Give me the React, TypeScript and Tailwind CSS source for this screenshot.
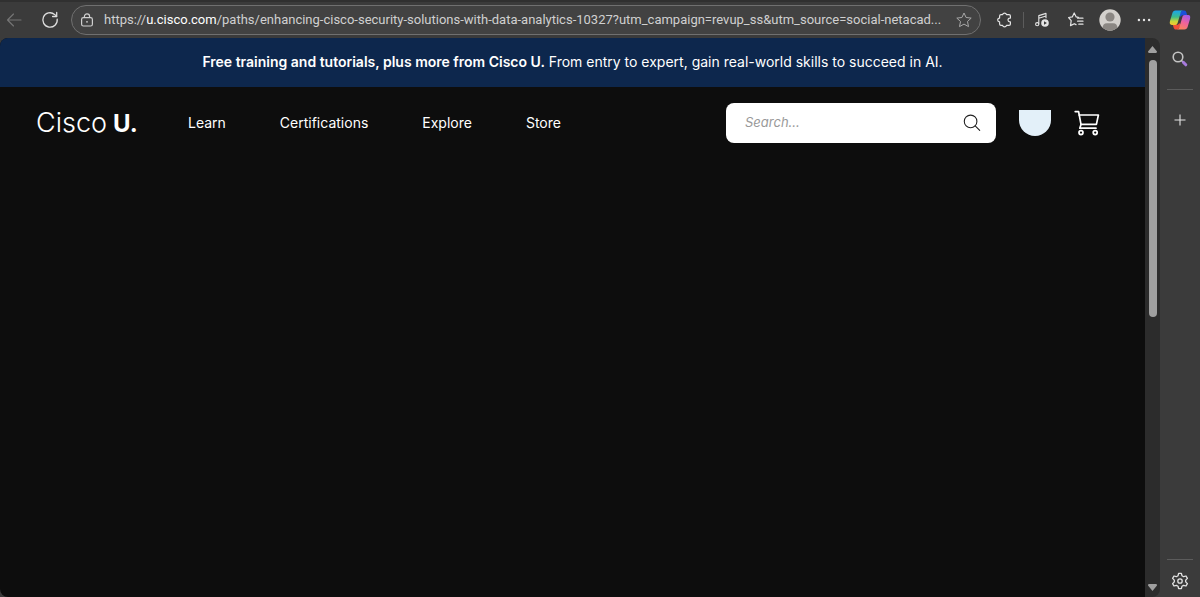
import type { ReactNode } from 'react';

const BackIcon = () => (
  <svg className="h-4 w-4" viewBox="0 0 16 16" fill="none" stroke="currentColor" strokeWidth="1.1" strokeLinecap="round" strokeLinejoin="round">
    <path d="M15 8H1.5M7.5 2L1.5 8L7.5 14" />
  </svg>
);

const ReloadIcon = () => (
  <svg className="h-[18px] w-[18px]" viewBox="0 0 18 18" fill="none" stroke="currentColor" strokeWidth="1.3" strokeLinecap="round" strokeLinejoin="round">
    <path d="M16.2 8.2A7.2 7.2 0 1 1 13.6 3.4L15.6 5.4" />
    <path d="M15.7 1.4V5.5H11.6" />
  </svg>
);

const LockIcon = () => (
  <svg className="h-[14px] w-[14px] shrink-0" viewBox="0 0 14 14" fill="none" stroke="currentColor" strokeWidth="1.2">
    <rect x="1.6" y="4.6" width="10.8" height="8.4" rx="1.8" />
    <path d="M4.4 4.6V3.4A2.6 2.6 0 0 1 9.6 3.4V4.6" />
    <circle cx="7" cy="8.8" r="0.9" fill="currentColor" stroke="none" />
  </svg>
);

const StarIcon = () => (
  <svg className="h-4 w-4" viewBox="0 0 16 16" fill="none" stroke="currentColor" strokeWidth="1" strokeLinejoin="round">
    <path d="M8 1L10.1 5.5L15.2 6.1L11.5 9.5L12.5 14.6L8 12.1L3.5 14.6L4.5 9.5L0.8 6.1L5.9 5.5Z" />
  </svg>
);

const ExtensionsIcon = () => (
  <svg className="h-4 w-4" viewBox="0 0 16 16" fill="none" stroke="currentColor" strokeWidth="1.2" strokeLinejoin="round">
    <path d="M4 2.6H5.6A2 1.9 0 0 1 9.5 2.6H12A1.4 1.4 0 0 1 13.4 4V6.1H12.9A1.9 1.9 0 0 0 12.9 9.9H13.4V12A1.4 1.4 0 0 1 12 13.4H9.5A2 1.9 0 0 1 5.6 13.4H4A1.4 1.4 0 0 1 2.6 12V9.9A1.9 1.9 0 0 1 2.6 6.1V4A1.4 1.4 0 0 1 4 2.6Z" />
  </svg>
);

const MediaIcon = () => (
  <svg className="h-4 w-4" viewBox="0 0 16 16" fill="none" stroke="currentColor" strokeWidth="1.1" strokeLinejoin="round">
    <circle cx="3.2" cy="12.2" r="1.6" />
    <path d="M4.8 12.2V3.6L12 1.4V6.2M4.8 6.2L12 4" />
    <circle cx="11" cy="11" r="3.8" fill="currentColor" stroke="none" />
    <path d="M10 9.2L12.9 11L10 12.8Z" fill="#3b3b3b" stroke="none" />
  </svg>
);

const FavoritesIcon = () => (
  <svg className="h-4 w-4" viewBox="0 0 16 16" fill="none" stroke="currentColor" strokeWidth="1.2" strokeLinecap="round" strokeLinejoin="round">
    <path d="M10.4 5.3L8.2 4.9L6.2 1L4.3 4.9L0.6 5.5L3.2 8.6L2.5 13.6L6.3 11.7L8 12.6" />
    <path d="M9.6 6.2H15M9.6 9.2H15M10.8 12.2H15" />
  </svg>
);

const ProfileIcon = () => (
  <svg className="h-[22px] w-[22px]" viewBox="0 0 22 22">
    <defs>
      <clipPath id="profile-disc">
        <circle cx="11" cy="11" r="10.7" />
      </clipPath>
    </defs>
    <g clipPath="url(#profile-disc)">
      <rect width="22" height="22" fill="#d3d0cc" />
      <circle cx="11" cy="8" r="4.6" fill="#8b8783" />
      <path d="M3.6 22V19Q3.6 14.2 8 14.2H14Q18.4 14.2 18.4 19V22Z" fill="#8b8783" />
    </g>
  </svg>
);

const MoreIcon = () => (
  <svg className="h-4 w-4" viewBox="0 0 16 16" fill="currentColor">
    <circle cx="2.9" cy="8" r="1.2" />
    <circle cx="8" cy="8" r="1.2" />
    <circle cx="13.1" cy="8" r="1.2" />
  </svg>
);

const CopilotIcon = () => (
  <svg className="h-[22px] w-[22px]" viewBox="0 0 22 22">
    <defs>
      <linearGradient id="copilot-left" x1="0" y1="0" x2="0" y2="1">
        <stop offset="0" stopColor="#18a4f0" />
        <stop offset="0.45" stopColor="#3cba8c" />
        <stop offset="0.75" stopColor="#c5d63c" />
        <stop offset="1" stopColor="#f5c530" />
      </linearGradient>
      <linearGradient id="copilot-right" x1="0.7" y1="0" x2="0.3" y2="1">
        <stop offset="0" stopColor="#a55be8" />
        <stop offset="0.5" stopColor="#f0629c" />
        <stop offset="1" stopColor="#f9845a" />
      </linearGradient>
    </defs>
    <path d="M13 1.5H15.2C16.5 1.5 17 2.4 17.4 3.6L18.2 6.2H13.8C12.6 6.2 12 7 11.7 8L10 6Z" fill="#1c50d8" />
    <path d="M9 20.5H7C5.6 20.5 5 19.6 4.6 18.4L3.8 15.8H8C9.2 15.8 9.8 15 10.2 14L12 16Z" fill="#f04e38" />
    <path d="M6.6 1.5H14C12.6 1.5 12 2.6 11.6 4L8.6 14C8.2 15.2 7.6 15.9 6.2 15.9H2.8C0.8 15.9 0.4 14.2 1 12L3.4 4C3.9 2.4 4.8 1.5 6.6 1.5Z" fill="url(#copilot-left)" />
    <path d="M15.4 20.5H8C9.4 20.5 10 19.4 10.4 18L13.4 8C13.8 6.8 14.4 6.1 15.8 6.1H19.2C21.2 6.1 21.6 7.8 21 10L18.6 18C18.1 19.6 17.2 20.5 15.4 20.5Z" fill="url(#copilot-right)" />
  </svg>
);

const SidebarSearchIcon = () => (
  <svg className="h-4 w-4" viewBox="0 0 16 16" fill="none">
    <circle cx="6" cy="6" r="4.8" stroke="#c4c4c4" strokeWidth="1.6" />
    <path d="M9.7 9.7L11 11" stroke="#d0d0d0" strokeWidth="1.6" />
    <path d="M11.4 11.4L13.8 13.8" stroke="#a77bdc" strokeWidth="3" strokeLinecap="round" />
  </svg>
);

const PlusIcon = () => (
  <svg className="h-3 w-3" viewBox="0 0 12 12" stroke="currentColor" strokeWidth="1.1">
    <path d="M6 0.5V11.5M0.5 6H11.5" />
  </svg>
);

const GearIcon = () => (
  <svg className="h-[18px] w-[18px]" viewBox="0 0 18 18" fill="none" stroke="currentColor" strokeWidth="1.3" strokeLinejoin="round">
    <path d="M7.6 1.4H10.4L11 3.8L12.6 4.7L15 4L16.4 6.4L14.7 8.1V9.9L16.4 11.6L15 14L12.6 13.3L11 14.2L10.4 16.6H7.6L7 14.2L5.4 13.3L3 14L1.6 11.6L3.3 9.9V8.1L1.6 6.4L3 4L5.4 4.7L7 3.8Z" />
    <circle cx="9" cy="9" r="2.2" />
  </svg>
);

const SearchIcon = () => (
  <svg className="h-[18px] w-[18px]" viewBox="0 0 18 18" fill="none" stroke="currentColor" strokeWidth="1.1" strokeLinecap="round">
    <circle cx="7.6" cy="7.4" r="6.3" />
    <path d="M12.2 11.8L16.7 16.3" />
  </svg>
);

const CartIcon = () => (
  <svg className="h-[26px] w-[26px]" viewBox="0 0 26 26" fill="none" stroke="currentColor" strokeWidth="1.7" strokeLinecap="round" strokeLinejoin="round">
    <path d="M1.2 1.6H4.6L7 14.4L5.8 18.2H22" />
    <path d="M5.2 5H24.4L22.4 14.4H7" />
    <circle cx="7" cy="22.6" r="2" />
    <circle cx="21.2" cy="22.6" r="2" />
  </svg>
);

const IconButton = ({ label, children }: { label: string; children: ReactNode }) => (
  <button type="button" aria-label={label} className="flex h-8 w-8 shrink-0 items-center justify-center text-[#e4e4e4]">
    {children}
  </button>
);

const navItems = ['Learn', 'Certifications', 'Explore', 'Store'];

const BrowserToolbar = () => (
  <div className="flex h-[38px] shrink-0 items-center border-t-2 border-[#303030] bg-[#3b3b3b] pr-1">
    <button type="button" aria-label="Back" disabled className="flex h-8 w-7 items-center justify-center text-[#757575]">
      <BackIcon />
    </button>
    <button type="button" aria-label="Reload" className="flex h-8 w-[43px] items-center justify-center text-[#dedede]">
      <ReloadIcon />
    </button>

    {/* Address bar */}
    <div className="flex h-[30px] min-w-0 flex-1 items-center rounded-full border border-[#707070] bg-[#424242] px-2 text-[#d0d0d0]">
      <LockIcon />
      <div className="ml-[10px] min-w-0 flex-1 truncate font-['Roboto',sans-serif] text-[13px] leading-5">
        https://<span className="text-white">u.cisco.com</span>/paths/enhancing-cisco-security-solutions-with-data-analytics-10327?utm_campaign=revup_ss&amp;utm_source=social-netacad...
      </div>
      <button type="button" aria-label="Add to favorites" className="shrink-0 text-[#a8a8a8]">
        <StarIcon />
      </button>
    </div>

    <div className="ml-2 flex items-center gap-0.5">
      <IconButton label="Extensions"><ExtensionsIcon /></IconButton>
      <div className="h-4 w-px bg-[#5c5c5c]" />
      <IconButton label="Media controls"><MediaIcon /></IconButton>
      <IconButton label="Favorites"><FavoritesIcon /></IconButton>
      <IconButton label="Profile"><ProfileIcon /></IconButton>
      <IconButton label="Settings and more"><MoreIcon /></IconButton>
      <div className="ml-0.5">
        <IconButton label="Copilot"><CopilotIcon /></IconButton>
      </div>
    </div>
  </div>
);

const SiteHeader = () => (
  <header className="flex items-center py-4 pr-[45px] pl-9 text-white">
    <a href="#" className="flex w-[100px] items-baseline gap-1.5">
      <span className="text-[27px] leading-8 font-light">Cisco</span>
      <span className="text-[24px] leading-8 font-bold">U.</span>
    </a>
    <nav className="ml-[52px] flex gap-[54px] text-[14px] leading-5">
      {navItems.map((item) => (
        <a key={item} href="#">{item}</a>
      ))}
    </nav>

    <form className="ml-auto flex h-10 w-[270px] items-center rounded-lg bg-white pr-[15px] pl-[19px]">
      <input
        type="search"
        aria-label="Search"
        placeholder="Search..."
        className="min-w-0 flex-1 bg-transparent text-[13px] text-black italic outline-none placeholder:text-[#999999]"
      />
      <button type="button" aria-label="Submit search" className="text-[#222222]">
        <SearchIcon />
      </button>
    </form>
    <button type="button" aria-label="Account" className="ml-[23px] h-[26px] w-8 rounded-b-full bg-[#e3f0f9]" />
    <a href="#" aria-label="Cart" className="ml-[23px]">
      <CartIcon />
    </a>
  </header>
);

const Scrollbar = () => (
  <div className="flex w-[15px] shrink-0 flex-col items-center rounded-r-lg bg-[#2c2c2c] pt-2 pb-1.5 text-[#9f9f9f]">
    <svg className="h-[7px] w-[9px]" viewBox="0 0 9 7" fill="currentColor">
      <path d="M4.5 0L9 5.6Q9 7 8 7H1Q0 7 0 5.6Z" />
    </svg>
    <div className="mt-[7px] h-[257px] w-2 rounded-full bg-[#9f9f9f]" />
    <svg className="mt-auto h-[7px] w-[9px]" viewBox="0 0 9 7" fill="currentColor">
      <path d="M4.5 7L9 1.4Q9 0 8 0H1Q0 0 0 1.4Z" />
    </svg>
  </div>
);

const Sidebar = () => (
  <aside className="flex w-10 shrink-0 flex-col items-center pt-[5px]">
    <IconButton label="Search sidebar"><SidebarSearchIcon /></IconButton>
    <div className="my-[14px] h-px w-[26px] bg-[#5c5c5c]" />
    <IconButton label="Add to sidebar"><PlusIcon /></IconButton>
    <div className="mt-auto mb-[5px] h-px w-[26px] bg-[#5c5c5c]" />
    <IconButton label="Sidebar settings"><GearIcon /></IconButton>
  </aside>
);

export default function App() {
  return (
    <div className="flex h-screen flex-col overflow-hidden bg-[#3b3b3b] font-['Inter',sans-serif]">
      <BrowserToolbar />
      <div className="flex min-h-0 flex-1">
        <main className="min-w-0 flex-1 overflow-hidden rounded-l-lg bg-[#0d0d0d]">
          {/* Announcement */}
          <div className="flex items-center justify-center bg-[#0d274d] pt-[14px] pb-[15px] text-[14px] leading-5 text-white">
            <p>
              <strong className="font-semibold">Free training and tutorials, plus more from Cisco U.</strong> From entry to expert, gain real-world skills to succeed in AI.
            </p>
          </div>
          <SiteHeader />
        </main>
        <Scrollbar />
        <Sidebar />
      </div>
    </div>
  );
}
